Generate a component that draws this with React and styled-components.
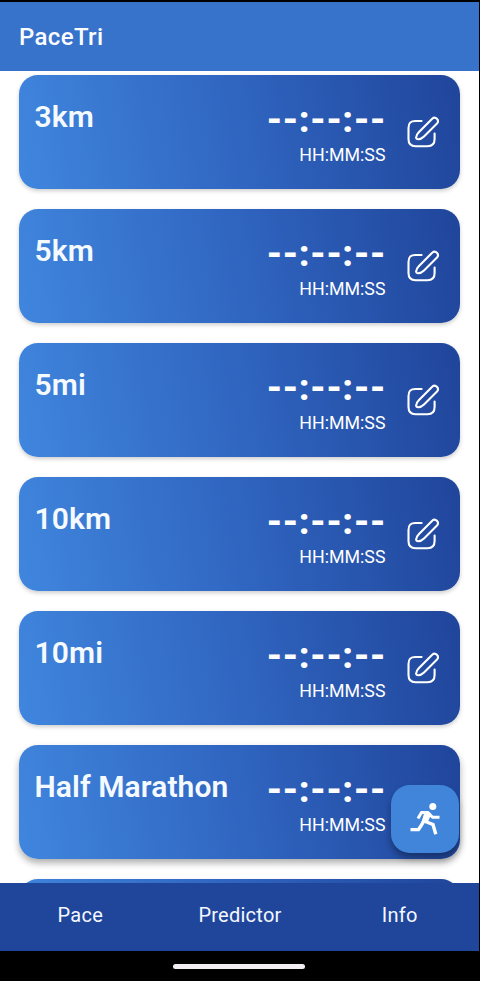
import React from "react";
import styled, { createGlobalStyle } from "styled-components";

const GlobalStyle = createGlobalStyle`
  * {
    box-sizing: border-box;
  }
  body {
    margin: 0;
    background: #000;
    font-family: Roboto, "Liberation Sans", sans-serif;
  }
`;

const Screen = styled.div`
  position: relative;
  width: 480px;
  height: 981px;
  padding-top: 2px;
  display: flex;
  flex-direction: column;
  overflow: hidden;
  background: #000;
`;

const Header = styled.header`
  flex: 0 0 69px;
  margin-right: 1px;
  padding: 0 19px;
  display: flex;
  align-items: center;
  background: #3873cb;
`;

const AppTitle = styled.h1`
  margin: 0;
  color: #fafcff;
  font-size: 24px;
  font-weight: 500;
  letter-spacing: 0.35px;
`;

const List = styled.main`
  flex: 1;
  min-height: 0;
  margin-right: 1px;
  padding: 4px 19px 0;
  display: flex;
  flex-direction: column;
  gap: 20px;
  overflow: hidden;
  background: #fff;
`;

const Card = styled.section`
  flex: 0 0 114px;
  padding: 0 20px 0 15.5px;
  display: flex;
  align-items: flex-start;
  border-radius: 19px;
  background: linear-gradient(80deg, #4086de 0%, #2f64bf 52%, #20459b 100%);
  box-shadow: ${p => (p.$raised ? "0 4px 7px rgba(0, 0, 0, 0.32)" : "0 2px 4px rgba(0, 0, 0, 0.2)")};
`;

const Distance = styled.h2`
  flex: 1;
  margin: 24px 0 0;
  color: #f5faff;
  font-size: 30px;
  line-height: 36px;
  font-weight: 600;
  letter-spacing: 0.1px;
  white-space: nowrap;
`;

const TimeBox = styled.div`
  margin-top: 22px;
  display: flex;
  flex-direction: column;
  align-items: flex-end;
  color: #fff;
`;

const Time = styled.span`
  font-size: 37.4px;
  line-height: 44px;
  font-weight: 800;
  letter-spacing: 0.4px;
`;

const Format = styled.span`
  font-size: 17.8px;
  line-height: 22px;
  margin-top: 3px;
  padding-right: 0.5px;
`;

const EditButton = styled.button`
  margin: 41px 0 0 21px;
  padding: 0;
  width: 33px;
  height: 34px;
  border: none;
  background: none;
  color: #fff;
  cursor: pointer;
`;

const Nav = styled.nav`
  flex: 0 0 68px;
  margin-right: 1px;
  display: flex;
  background: #20469c;
`;

const NavItem = styled.a`
  flex: 1;
  display: flex;
  align-items: center;
  justify-content: center;
  padding: 0 0 4px 1px;
  color: #f4f8ff;
  font-size: 20px;
  letter-spacing: 0.25px;
`;

const SystemBar = styled.div`
  flex: 0 0 30px;
  margin-right: 2px;
  display: flex;
  align-items: center;
  justify-content: center;
`;

const HomeHandle = styled.div`
  width: 132px;
  height: 5px;
  border-radius: 3px;
  background: #f2eff2;
`;

// Floating button, sits over the list
const RunButton = styled.button`
  position: absolute;
  right: 21px;
  bottom: 128px;
  width: 68px;
  height: 68px;
  padding: 0;
  border: none;
  border-radius: 19px;
  background: #4085da;
  box-shadow: 0 5px 7px rgba(0, 0, 0, 0.35);
  color: #fff;
  cursor: pointer;
`;

const EditIcon = () => (
  <svg width="33" height="34" viewBox="0 0 33 34" fill="none" stroke="currentColor" strokeWidth="2.1" strokeLinecap="round" strokeLinejoin="round">
    <path d="M14.6 5H8.5C3.5 5 1.5 7 1.5 12V23C1.5 28 3.5 30.2 8.5 30.2H20.5C25.5 30.2 27.6 28 27.6 23V17.5" />
    <path d="M25.2 2.7A3.4 3.4 0 0 1 30 7.5L17 20.5C15 22.5 13.2 23.2 11.2 23.2C9.8 23.2 9.1 22.5 9.2 21.2C9.3 19 10 17.9 12 15.9Z" />
  </svg>
);

const RunIcon = () => (
  <svg width="68" height="68" viewBox="1 0 68 68" fill="none" stroke="currentColor">
    <circle cx="42.8" cy="21.6" r="3.5" fill="currentColor" stroke="none" />
    <path d="M28 33.5 31.5 27.5 38 27.5 42.5 32.3H49.5" strokeWidth="3" strokeLinejoin="round" />
    <path d="M38 27.5 32.5 38.5 28.5 44.6H20.5" strokeWidth="3.4" />
    <path d="M34 36 43 39.5 45.8 49.2" strokeWidth="3.4" />
    <path d="M34.5 27 41 29.5 37.5 38 31.5 37Z" fill="currentColor" stroke="none" />
  </svg>
);

const distances = ["3km", "5km", "5mi", "10km", "10mi", "Half Marathon", "Marathon"];

export default function App() {
  return (
    <>
      <GlobalStyle />
      <Screen>
        <Header>
          <AppTitle>PaceTri</AppTitle>
        </Header>
        <List>
          {distances.map(name => (
            <Card key={name} $raised={name === "Half Marathon"}>
              <Distance>{name}</Distance>
              <TimeBox>
                <Time>--:--:--</Time>
                <Format>HH:MM:SS</Format>
              </TimeBox>
              <EditButton aria-label="Edit">
                <EditIcon />
              </EditButton>
            </Card>
          ))}
        </List>
        <Nav>
          <NavItem>Pace</NavItem>
          <NavItem>Predictor</NavItem>
          <NavItem>Info</NavItem>
        </Nav>
        <SystemBar>
          <HomeHandle />
        </SystemBar>
        <RunButton aria-label="Run">
          <RunIcon />
        </RunButton>
      </Screen>
    </>
  );
}
